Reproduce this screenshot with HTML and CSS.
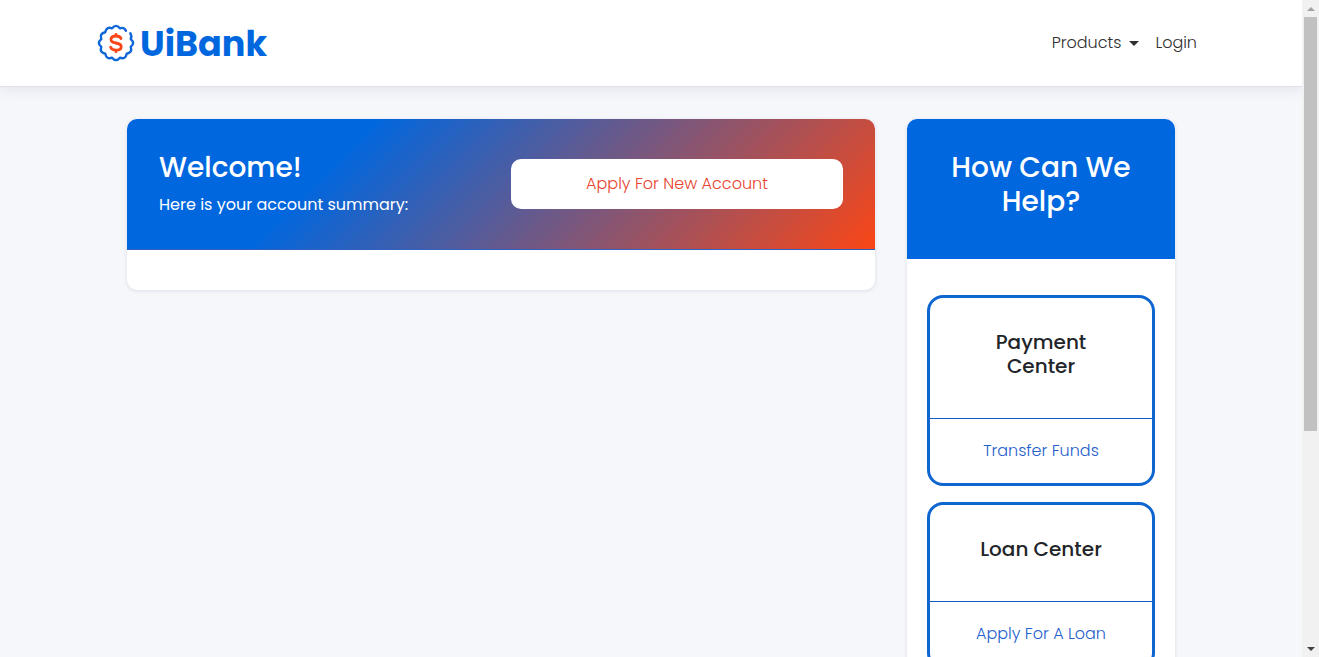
FILE: index.html
```html
<!DOCTYPE html>
<html lang="en">
<head>
<meta charset="utf-8">
<meta name="viewport" content="width=device-width, initial-scale=1">
<title>UiBank</title>
<link rel="stylesheet" href="styles.css">
</head>
<body>
<div class="page">
  <header class="navbar">
    <div class="navbar-inner">
      <a class="brand" href="#">
        <svg class="brand-icon" viewBox="0 0 38 38" fill="none" stroke-linecap="round" stroke-linejoin="round" aria-hidden="true">
          <path stroke="#0f66d6" stroke-width="2.400" d="M33.300 9.200 Q35.200 12.500 33.700 15.100 Q38.500 19 33.700 22.900 Q35.750 28.500 29.750 29.750 Q28.500 35.750 22.900 33.700 Q19 38.500 15.100 33.700 Q9.500 35.750 8.250 29.750 Q2.250 28.500 4.300 22.900 Q-0.500 19 4.300 15.100 Q2.250 9.500 8.250 8.250 Q9.500 2.250 15.100 4.300 Q19 -0.500 22.900 4.300 Q27.200 2.800 28.900 6.800"/>
          <path stroke="#fa4616" stroke-width="2.800" d="M24 14.500 C23.200 12.800 21.500 12 19 12 C16 12 14 13.300 14 15.400 C14 17.900 16.300 18.500 19 19 C21.900 19.500 24.200 20.200 24.200 22.700 C24.200 24.900 22 26.200 19 26.200 C16.400 26.200 14.400 25.200 13.600 23.300 M19 10.500 V12 M19 26.200 V27.700"/>
        </svg>
        <span class="brand-name">UiBank</span>
      </a>
      <nav class="nav">
        <button class="nav-link" type="button">Products <span class="caret"></span></button>
        <a class="nav-link" href="#">Login</a>
      </nav>
    </div>
  </header>
  <main class="content">
    <section class="panel">
      <div class="panel-head welcome">
        <div>
          <h1 class="title">Welcome!</h1>
          <p class="subtitle">Here is your account summary:</p>
        </div>
        <button class="apply" type="button">Apply For New Account</button>
      </div>
      <div class="summary"></div>
    </section>
    <aside class="panel">
      <div class="panel-head help">
        <h2 class="title">How Can We Help?</h2>
      </div>
      <div class="options">
        <article class="option">
          <h3 class="option-title">Payment Center</h3>
          <a class="option-link" href="#">Transfer Funds</a>
        </article>
        <article class="option">
          <h3 class="option-title">Loan Center</h3>
          <a class="option-link" href="#">Apply For A Loan</a>
        </article>
      </div>
    </aside>
  </main>
</div>
<div class="scrollbar" aria-hidden="true">
  <span class="arrow arrow-up"></span>
  <div class="track"><div class="thumb"></div></div>
  <span class="arrow arrow-down"></span>
</div>
</body>
</html>
```
FILE: styles.css
```css
* { box-sizing: border-box; }

body {
  display: flex;
  height: 100vh;
  margin: 0;
  overflow: hidden;
  background: #f5f7fb;
  color: #212529;
  font: 300 16px/24px Poppins, Inter, sans-serif;
}

h1, h2, h3, p { margin: 0; }
a { color: inherit; text-decoration: none; }
button { border: 0; background: none; color: inherit; font: inherit; cursor: pointer; }

.page { flex: 1; min-width: 0; overflow: hidden; }

.navbar {
  padding: 0 24px;
  border-bottom: 1px solid #dfe1e6;
  background: #fff;
  box-shadow: 0 2px 14px rgba(40, 45, 80, .1);
}
.navbar-inner {
  display: flex;
  align-items: center;
  justify-content: space-between;
  max-width: 1108px;
  margin: 0 auto;
  padding: 24px 0;
}
.brand { display: flex; align-items: center; gap: 5px; }
.brand-icon { width: 38px; height: 38px; }
.brand-name { padding-top: 2px; color: #0067df; font-size: 35px; font-weight: 700; line-height: 36px; }
.nav { display: flex; align-items: center; }
.nav-link { display: flex; align-items: center; gap: 8px; padding: 0 8px; color: #303030; }
.caret { border: 5px solid transparent; border-top-color: #303030; border-bottom: 0; }

.content {
  display: grid;
  grid-template-columns: minmax(0, 1fr) 268px;
  align-items: start;
  gap: 32px;
  max-width: 1048px;
  margin: 0 auto;
  padding: 32px 0;
}
.panel {
  overflow: hidden;
  border-radius: 10px;
  background: #fff;
  box-shadow: 0 1px 4px rgba(40, 45, 80, .12);
}
.panel-head { color: #fff; font-weight: 400; }
.title { margin-bottom: 8px; font-size: 28px; font-weight: 500; line-height: 34px; }
.welcome {
  display: grid;
  grid-template-columns: 1fr 1fr;
  align-items: center;
  gap: 20px;
  padding: 32px;
  border-bottom: 1px solid #2f5fbf;
  background: linear-gradient(135deg, #0067df 28%, #fa4616);
}
.apply { padding: 13px; border-radius: 10px; background: #fff; color: #e8432e; font-weight: 300; }
.summary { height: 40px; }
.help { padding: 32px; background: #0067df; text-align: center; }

.options { display: grid; gap: 16px; padding: 36px 20px; text-align: center; }
.option { overflow: hidden; border: 3px solid #0f66d0; border-radius: 16px; }
.option-title {
  padding: 32px 40px 40px;
  border-bottom: 1px solid #0f5cc0;
  font-size: 20px;
  font-weight: 500;
}
.option-link { display: block; padding: 20px; color: #2460cc; }

.scrollbar { display: flex; flex-direction: column; width: 17px; background: #f1f1f1; }
.arrow { display: grid; place-items: center; height: 17px; }
.arrow::after { content: ""; border: 4px solid transparent; }
.arrow-up::after { border-top: 0; border-bottom-color: #a3a3a3; }
.arrow-down::after { border-bottom: 0; border-top-color: #404040; }
.track { flex: 1; padding: 0 2px; }
.thumb { height: 66.5%; background: #c1c1c1; }
```
